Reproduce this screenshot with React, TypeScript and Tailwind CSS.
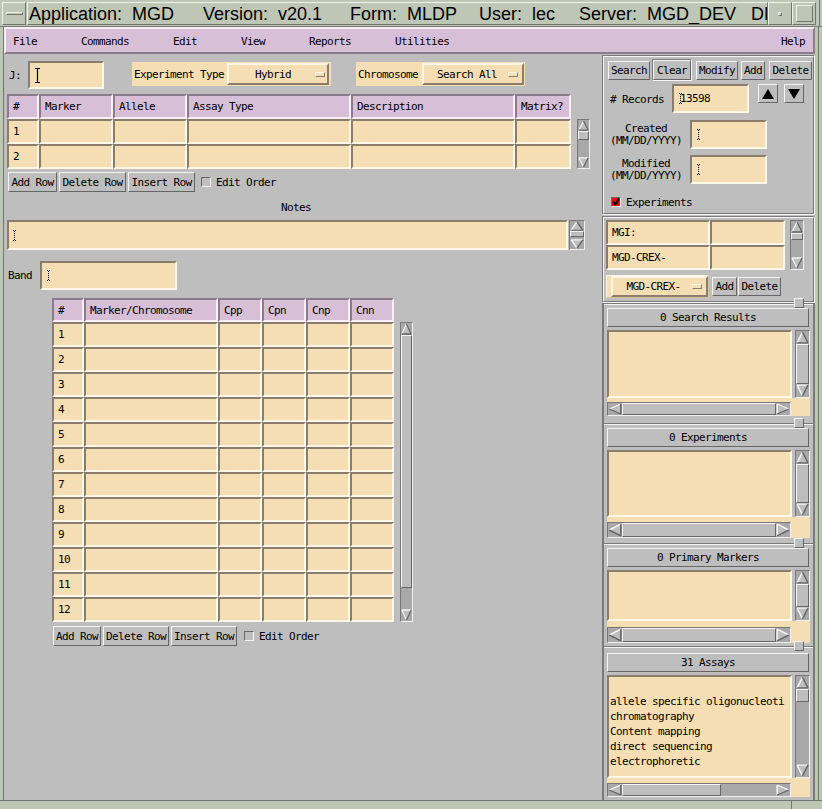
import React from "react";

const FONT = "font-['DejaVu_Sans_Mono',monospace] text-[11px] tracking-[-0.62px] leading-none text-black";
const SUNK = "bg-[#f5deb3] border-2 border-t-[#8b7d6b] border-l-[#8b7d6b] border-r-[#fff8e8] border-b-[#fff8e8]";
const RAISED = "bg-[#bebebe] border border-t-[#f4f4f4] border-l-[#f4f4f4] border-r-[#666666] border-b-[#666666]";
const TH = "bg-[#d8bfd8] border-2 border-t-[#8b7b8b] border-l-[#8b7b8b] border-r-[#fbeefb] border-b-[#fbeefb]";
const WRAISED = "bg-[#f5deb3] border-2 border-t-[#fff8e8] border-l-[#fff8e8] border-r-[#8b7d6b] border-b-[#8b7d6b]";
const ETCH_OUT = "border border-t-[#7a7a7a] border-l-[#7a7a7a] border-r-[#f4f4f4] border-b-[#f4f4f4]";
const ETCH_IN = "border border-t-[#f4f4f4] border-l-[#f4f4f4] border-r-[#7a7a7a] border-b-[#7a7a7a]";
const WM_RAISED = "border border-t-[#eef2ea] border-l-[#eef2ea] border-r-[#6f776f] border-b-[#6f776f]";

type Dir = "up" | "down" | "left" | "right";
const ARROWS: Record<Dir, { p: string; l: string; d: string }> = {
  up: { p: "6,1 11,11 1,11", l: "M6 1L1 11", d: "M6 1L11 11 M1 11H11" },
  down: { p: "6,11 11,1 1,1", l: "M1 1H11 M1 1L6 11", d: "M11 1L6 11" },
  left: { p: "1,6 11,1 11,11", l: "M1 6L11 1", d: "M11 1V11 M1 6L11 11" },
  right: { p: "11,6 1,1 1,11", l: "M1 1V11 M1 1L11 6", d: "M1 11L11 6" },
};

function Arrow({ dir }: { dir: Dir }) {
  const a = ARROWS[dir];
  return (
    <svg viewBox="0 0 12 12" preserveAspectRatio="none" className="w-full h-full block">
      <polygon points={a.p} fill="#bebebe" />
      <path d={a.l} stroke="#f4f4f4" strokeWidth="1.3" fill="none" />
      <path d={a.d} stroke="#666666" strokeWidth="1.3" fill="none" />
    </svg>
  );
}

function VScroll({ className = "", a, children }: { className?: string; a: string; children?: React.ReactNode }) {
  return (
    <div className={`flex flex-col shrink-0 bg-[#a8a8a8] border border-t-[#777777] border-l-[#777777] border-r-[#f0f0f0] border-b-[#f0f0f0] ${className}`}>
      <div className={`w-full shrink-0 ${a}`}><Arrow dir="up" /></div>
      {children ?? <div className={`flex-1 ${RAISED}`} />}
      <div className={`w-full shrink-0 ${a}`}><Arrow dir="down" /></div>
    </div>
  );
}

function HScroll({ className = "", a, children }: { className?: string; a: string; children?: React.ReactNode }) {
  return (
    <div className={`flex shrink-0 bg-[#a8a8a8] border border-t-[#777777] border-l-[#777777] border-r-[#f0f0f0] border-b-[#f0f0f0] ${className}`}>
      <div className={`h-full shrink-0 ${a}`}><Arrow dir="left" /></div>
      {children ?? <div className={`flex-1 ${RAISED}`} />}
      <div className={`h-full shrink-0 ${a}`}><Arrow dir="right" /></div>
    </div>
  );
}

function Btn({ className = "", children }: { className?: string; children?: React.ReactNode }) {
  return <div className={`${RAISED} flex items-center justify-center shrink-0 whitespace-pre ${className}`}>{children}</div>;
}

function Check() {
  return <div className="w-[10px] h-[10px] shrink-0 bg-[#bebebe] border border-t-[#6a6a6a] border-l-[#6a6a6a] border-r-[#f4f4f4] border-b-[#f4f4f4]" />;
}

function DotCursor() {
  const px = [[1, 0], [3, 0], [2, 1], [2, 3], [2, 5], [2, 7], [2, 9], [1, 10], [3, 10]];
  return (
    <svg width="5" height="11" viewBox="0 0 5 11" className="shrink-0">
      {px.map(([x, y], i) => (
        <rect key={i} x={x} y={y} width="1" height="1" fill="#000" />
      ))}
    </svg>
  );
}

function Indicator() {
  return <div className="w-[10px] h-[5px] shrink-0 border border-t-[#fff8e8] border-l-[#fff8e8] border-r-[#8b7d6b] border-b-[#8b7d6b]" />;
}

const T1 = [
  { h: "#", w: "w-[32px]" },
  { h: "Marker", w: "w-[74px]" },
  { h: "Allele", w: "w-[74px]" },
  { h: "Assay Type", w: "w-[164px]" },
  { h: "Description", w: "w-[164px]" },
  { h: "Matrix?", w: "w-[56px]" },
];

const T2 = [
  { h: "#", w: "w-[32px]" },
  { h: "Marker/Chromosome", w: "w-[134px]" },
  { h: "Cpp", w: "w-[44px]" },
  { h: "Cpn", w: "w-[44px]" },
  { h: "Cnp", w: "w-[44px]" },
  { h: "Cnn", w: "w-[44px]" },
];

function ScrolledList({
  listCls,
  stripCls,
  hsCls,
  children,
  vThumb,
  hThumb,
}: {
  listCls: string;
  stripCls: string;
  hsCls: string;
  children?: React.ReactNode;
  vThumb?: React.ReactNode;
  hThumb?: React.ReactNode;
}) {
  return (
    <div className="ml-[3px] w-[203px] bg-[#f5deb3] flex flex-col shrink-0">
      <div className={`flex ${listCls}`}>
        <div className={`${SUNK} w-[185px] h-full overflow-hidden`}>{children}</div>
        <div className="w-[18px] h-full bg-[#bebebe] pl-[3px] flex">
          <VScroll className="w-[15px] h-full" a="h-[13px]">{vThumb}</VScroll>
        </div>
      </div>
      <div className={stripCls} />
      <div className={`flex ${hsCls}`}>
        <HScroll className="w-[184px] h-full" a="w-[14px]">{hThumb}</HScroll>
      </div>
    </div>
  );
}

function Sash() {
  return <div className={`absolute top-[-6px] right-[9px] w-[10px] h-[10px] ${RAISED}`} />;
}

const PANE = "relative flex flex-col shrink-0 border-t border-t-[#7a7a7a] shadow-[inset_0_1px_0_#f4f4f4]";

export default function App() {
  return (
    <div className={`w-[822px] h-[809px] overflow-hidden flex flex-col bg-[#bec6b6] ${FONT}`}>
      {/* Title bar */}
      <div className="flex h-[27px] shrink-0 border-b border-b-[#757d75]">
        <div className={`ml-[2px] mt-[2px] w-[24px] h-[23px] ${WM_RAISED} flex items-center justify-center`}>
          <div className={`w-[17px] h-[3px] ${WM_RAISED}`} />
        </div>
        <div className={`ml-[1px] mt-[2px] h-[23px] w-[741px] ${WM_RAISED} overflow-hidden flex items-center pl-[1px] whitespace-pre font-['Liberation_Sans',Arial,sans-serif] text-[18px] tracking-normal leading-none text-black`}>
          <span className="w-[174px] shrink-0">Application:  MGD</span>
          <span className="w-[147px] shrink-0">Version:  v20.1</span>
          <span className="w-[129px] shrink-0">Form:  MLDP</span>
          <span className="w-[100px] shrink-0">User:  lec</span>
          <span className="w-[172px] shrink-0">Server:  MGD_DEV</span>
          <span className="shrink-0">DB:  mgd</span>
        </div>
        <div className={`mt-[2px] w-[24px] h-[23px] ${WM_RAISED} flex items-center justify-center`}>
          <div className={`w-[4px] h-[4px] ${WM_RAISED}`} />
        </div>
        <div className={`mt-[2px] w-[24px] h-[23px] ${WM_RAISED} flex items-center justify-center`}>
          <div className={`w-[17px] h-[17px] ${WM_RAISED}`} />
        </div>
        <div className="w-[4px] border-r border-r-[#6f776f]" />
      </div>

      <div className="flex h-[773px] shrink-0">
        <div className="w-[4px] shrink-0 border-r border-r-[#6f776f]" />
        <div className="w-[811px] shrink-0 flex flex-col">
          {/* Menubar */}
          <div className="h-[27px] shrink-0 bg-[#d8bfd8] border-2 border-t-[#f6ecf6] border-l-[#f6ecf6] border-r-[#8b7b8b] border-b-[#8b7b8b] flex items-center pl-[7px] pr-[8px] gap-[44px] pt-[1px]">
            <span>File</span>
            <span>Commands</span>
            <span>Edit</span>
            <span>View</span>
            <span>Reports</span>
            <span>Utilities</span>
            <span className="ml-auto">Help</span>
          </div>

          {/* Main */}
          <div className="h-[746px] shrink-0 flex bg-[#bebebe]">
            {/* Left panel */}
            <div className="w-[598px] shrink-0 flex flex-col">
              <div className="mt-[7px] h-[28px] flex items-center">
                <span className="ml-[5px]">J:</span>
                <div className={`${SUNK} ml-[7px] w-[76px] h-[28px] flex items-center pl-[4px]`}>
                  <svg width="7" height="15" viewBox="0 0 7 15">
                    <path d="M1 0.5H6 M3.5 0.5V14.5 M1 14.5H6" stroke="#000" strokeWidth="1.2" fill="none" />
                  </svg>
                </div>
                <div className="self-start mt-[1px] ml-[28px] w-[199px] h-[24px] bg-[#f5deb3] flex items-center">
                  <span className="ml-[2px] whitespace-pre">Experiment Type</span>
                  <div className={`${WRAISED} ml-[3px] w-[102px] h-[22px] flex items-center`}>
                    <span className="flex-1 text-center pl-[2px]">Hybrid</span>
                    <div className="mr-[2px]"><Indicator /></div>
                  </div>
                </div>
                <div className="self-start mt-[1px] ml-[25px] w-[169px] h-[24px] bg-[#f5deb3] flex items-center">
                  <span className="ml-[2px]">Chromosome</span>
                  <div className={`${WRAISED} ml-[4px] w-[102px] h-[22px] flex items-center`}>
                    <span className="flex-1 text-center pl-[2px] whitespace-pre">Search All</span>
                    <div className="mr-[4px]"><Indicator /></div>
                  </div>
                </div>
              </div>

              {/* Table 1 */}
              <div className="mt-[5px] flex">
                <div className="ml-[3px] flex flex-col shrink-0">
                  <div className="flex h-[25px]">
                    {T1.map((c) => (
                      <div key={c.h} className={`${TH} ${c.w} flex items-center pl-[4px] whitespace-pre`}>{c.h}</div>
                    ))}
                  </div>
                  {["1", "2"].map((r) => (
                    <div key={r} className="flex h-[25px]">
                      {T1.map((c, i) => (
                        <div key={i} className={`${SUNK} ${c.w} flex items-center pl-[4px]`}>{i === 0 ? r : ""}</div>
                      ))}
                    </div>
                  ))}
                </div>
                <VScroll className="ml-[6px] mt-[25px] w-[13px] h-[50px]" a="h-[11px]">
                  <div className={`h-[9px] shrink-0 ${RAISED}`} />
                  <div className="flex-1" />
                </VScroll>
              </div>

              <div className="mt-[3px] h-[20px] flex items-center">
                <Btn className="ml-[4px] w-[49px] h-[20px]">Add Row</Btn>
                <Btn className="ml-[2px] w-[67px] h-[20px]">Delete Row</Btn>
                <Btn className="ml-[2px] w-[67px] h-[20px]">Insert Row</Btn>
                <div className="ml-[6px]"><Check /></div>
                <span className="ml-[5px] whitespace-pre">Edit Order</span>
              </div>

              <div className="mt-[9px] h-[12px] ml-[3px] w-[578px] flex items-center justify-center">Notes</div>

              <div className="mt-[7px] h-[30px] flex">
                <div className={`${SUNK} ml-[3px] w-[561px] h-[30px] flex items-center pl-[3px]`}>
                  <DotCursor />
                </div>
                <VScroll className="ml-[1px] w-[16px] h-[30px]" a="h-[10px]">
                  <div className={`h-[6px] shrink-0 ${RAISED}`} />
                  <div className="flex-1" />
                </VScroll>
              </div>

              <div className="mt-[11px] h-[29px] flex items-center">
                <span className="ml-[4px]">Band</span>
                <div className={`${SUNK} ml-[8px] w-[137px] h-[29px] flex items-center pl-[4px]`}>
                  <DotCursor />
                </div>
              </div>

              {/* Table 2 */}
              <div className="mt-[8px] flex">
                <div className="ml-[48px] flex flex-col shrink-0">
                  <div className="flex h-[24px]">
                    {T2.map((c) => (
                      <div key={c.h} className={`${TH} ${c.w} flex items-center pl-[4px]`}>{c.h}</div>
                    ))}
                  </div>
                  {["1", "2", "3", "4", "5", "6", "7", "8", "9", "10", "11", "12"].map((r) => (
                    <div key={r} className="flex h-[25px]">
                      {T2.map((c, i) => (
                        <div key={i} className={`${SUNK} ${c.w} flex items-center pl-[4px]`}>{i === 0 ? r : ""}</div>
                      ))}
                    </div>
                  ))}
                </div>
                <VScroll className="ml-[6px] mt-[24px] w-[13px] h-[300px]" a="h-[12px]">
                  <div className={`h-[253px] shrink-0 ${RAISED}`} />
                  <div className="flex-1" />
                </VScroll>
              </div>

              <div className="mt-[4px] h-[20px] flex items-center">
                <Btn className="ml-[49px] w-[48px] h-[20px]">Add Row</Btn>
                <Btn className="ml-[2px] w-[66px] h-[20px]">Delete Row</Btn>
                <Btn className="ml-[2px] w-[66px] h-[20px]">Insert Row</Btn>
                <div className="ml-[7px]"><Check /></div>
                <span className="ml-[5px] whitespace-pre">Edit Order</span>
              </div>
            </div>

            {/* Right panel */}
            <div className="w-[213px] shrink-0 flex flex-col pt-[1px]">
              {/* Frame 1 */}
              <div className={`${ETCH_OUT} h-[160px] shrink-0`}>
                <div className={`${ETCH_IN} h-full flex flex-col`}>
                  <div className="mt-[2px] h-[22px] flex items-center">
                    <Btn className="ml-[4px] w-[42px] h-[19px]">Search</Btn>
                    <div className="ml-[2px] w-[40px] h-[22px] flex border border-t-[#7a7a7a] border-l-[#7a7a7a] border-r-[#f4f4f4] border-b-[#f4f4f4]">
                      <Btn className="w-full h-full">Clear</Btn>
                    </div>
                    <Btn className="ml-[4px] w-[42px] h-[19px]">Modify</Btn>
                    <Btn className="ml-[3px] w-[24px] h-[19px]">Add</Btn>
                    <Btn className="ml-[4px] w-[43px] h-[19px]">Delete</Btn>
                  </div>
                  <div className="mt-[3px] h-[29px] flex items-center">
                    <span className="ml-[6px] whitespace-pre mt-[2px]"># Records</span>
                    <div className={`${SUNK} ml-[8px] w-[77px] h-[29px] flex items-center pl-[4px]`}>
                      <DotCursor />
                      <span className="ml-[-3px]">13598</span>
                    </div>
                    <Btn className="self-start ml-[9px] w-[20px] h-[19px]">
                      <svg width="12" height="10" viewBox="0 0 12 10"><polygon points="6,0 12,10 0,10" fill="#000" /></svg>
                    </Btn>
                    <Btn className="self-start ml-[6px] w-[20px] h-[19px]">
                      <svg width="12" height="10" viewBox="0 0 12 10"><polygon points="0,0 12,0 6,10" fill="#000" /></svg>
                    </Btn>
                  </div>
                  <div className="mt-[7px] h-[29px] flex items-center">
                    <div className="ml-[2px] w-[80px] flex flex-col items-center leading-[12px]">
                      <span>Created</span>
                      <span>(MM/DD/YYYY)</span>
                    </div>
                    <div className={`${SUNK} ml-[4px] w-[77px] h-[29px] flex items-center pl-[4px]`}>
                      <DotCursor />
                    </div>
                  </div>
                  <div className="mt-[6px] h-[29px] flex items-center">
                    <div className="ml-[2px] w-[80px] flex flex-col items-center leading-[12px]">
                      <span>Modified</span>
                      <span>(MM/DD/YYYY)</span>
                    </div>
                    <div className={`${SUNK} ml-[4px] w-[77px] h-[29px] flex items-center pl-[4px]`}>
                      <DotCursor />
                    </div>
                  </div>
                  <div className="mt-[13px] h-[10px] flex items-center">
                    <div className="ml-[7px] w-[10px] h-[10px] bg-[#ff0000] border border-t-[#6a6a6a] border-l-[#6a6a6a] border-r-[#f4f4f4] border-b-[#f4f4f4] flex items-center justify-center">
                      <svg width="8" height="8" viewBox="0 0 8 8">
                        <path d="M1 3.5L3.5 6.5L7 0.5" stroke="#000" strokeWidth="2" fill="none" />
                      </svg>
                    </div>
                    <span className="ml-[5px]">Experiments</span>
                  </div>
                </div>
              </div>

              {/* Frame 2 */}
              <div className={`${ETCH_OUT} h-[87px] mt-[1px] shrink-0`}>
                <div className={`${ETCH_IN} h-full flex flex-col`}>
                  <div className="mt-[2px] flex">
                    <div className="ml-[2px] flex flex-col shrink-0">
                      <div className="flex h-[25px]">
                        <div className={`${SUNK} w-[104px] flex items-center pl-[4px]`}>MGI:</div>
                        <div className={`${SUNK} w-[75px]`} />
                      </div>
                      <div className="flex h-[25px]">
                        <div className={`${SUNK} w-[104px] flex items-center pl-[4px]`}>MGD-CREX-</div>
                        <div className={`${SUNK} w-[75px]`} />
                      </div>
                    </div>
                    <VScroll className="ml-[5px] w-[14px] h-[50px]" a="h-[12px]">
                      <div className={`h-[7px] shrink-0 ${RAISED}`} />
                      <div className="flex-1" />
                    </VScroll>
                  </div>
                  <div className="mt-[5px] h-[23px] flex items-center">
                    <div className="ml-[2px] w-[103px] h-[23px] bg-[#f5deb3] flex items-center border border-t-[#fff8e8] border-l-[#fff8e8] border-r-[#d8c39c] border-b-[#d8c39c]">
                      <div className={`${WRAISED} ml-[4px] w-[97px] h-[21px] flex items-center`}>
                        <span className="flex-1 text-center pl-[2px]">MGD-CREX-</span>
                        <div className="mr-[4px]"><Indicator /></div>
                      </div>
                    </div>
                    <Btn className="ml-[3px] w-[25px] h-[19px]">Add</Btn>
                    <Btn className="ml-[1px] w-[43px] h-[19px]">Delete</Btn>
                  </div>
                </div>
              </div>

              {/* Paned lists */}
              <div className="flex-1 flex flex-col border-l-2 border-r-2 border-l-[#7a7a7a] border-r-[#7a7a7a]">
                <div className={`${PANE} h-[120px]`}>
                  <Sash />
                  <Btn className="mt-[4px] ml-[3px] w-[202px] h-[19px]">0 Search Results</Btn>
                  <div className="mt-[3px]">
                    <ScrolledList listCls="h-[68px]" stripCls="h-[4px]" hsCls="h-[14px]" />
                  </div>
                </div>
                <div className={`${PANE} h-[120px]`}>
                  <Sash />
                  <Btn className="mt-[4px] ml-[3px] w-[202px] h-[19px]">0 Experiments</Btn>
                  <div className="mt-[3px]">
                    <ScrolledList listCls="h-[67px]" stripCls="h-[5px]" hsCls="h-[16px]" />
                  </div>
                </div>
                <div className={`${PANE} h-[103px]`}>
                  <Sash />
                  <Btn className="mt-[4px] ml-[3px] w-[202px] h-[19px]">0 Primary Markers</Btn>
                  <div className="mt-[3px]">
                    <ScrolledList listCls="h-[51px]" stripCls="h-[6px]" hsCls="h-[16px]" />
                  </div>
                </div>
                <div className={`${PANE} h-[154px]`}>
                  <Sash />
                  <Btn className="mt-[6px] ml-[3px] w-[202px] h-[19px]">31 Assays</Btn>
                  <div className="mt-[3px]">
                    <ScrolledList
                      listCls="h-[103px]"
                      stripCls="h-[5px]"
                      hsCls="h-[14px]"
                      vThumb={
                        <>
                          <div className={`h-[13px] shrink-0 ${RAISED}`} />
                          <div className="flex-1" />
                        </>
                      }
                      hThumb={
                        <>
                          <div className={`w-[99px] shrink-0 ${RAISED}`} />
                          <div className="flex-1" />
                        </>
                      }
                    >
                      <div className="pt-[17px] pl-[1px] flex flex-col leading-[15px] whitespace-pre">
                        <span>allele specific oligonucleoti</span>
                        <span>chromatography</span>
                        <span>Content mapping</span>
                        <span>direct sequencing</span>
                        <span>electrophoretic</span>
                      </div>
                    </ScrolledList>
                  </div>
                </div>
              </div>
            </div>
          </div>
        </div>
        <div className="w-[7px] shrink-0 pl-[3px]">
          <div className="h-full border-l border-l-[#6f776f]" />
        </div>
      </div>
      <div className="h-[9px] shrink-0 border-t border-t-[#6f776f] flex">
        <div className="w-[792px] border-r border-r-[#6f776f]" />
      </div>
    </div>
  );
}
